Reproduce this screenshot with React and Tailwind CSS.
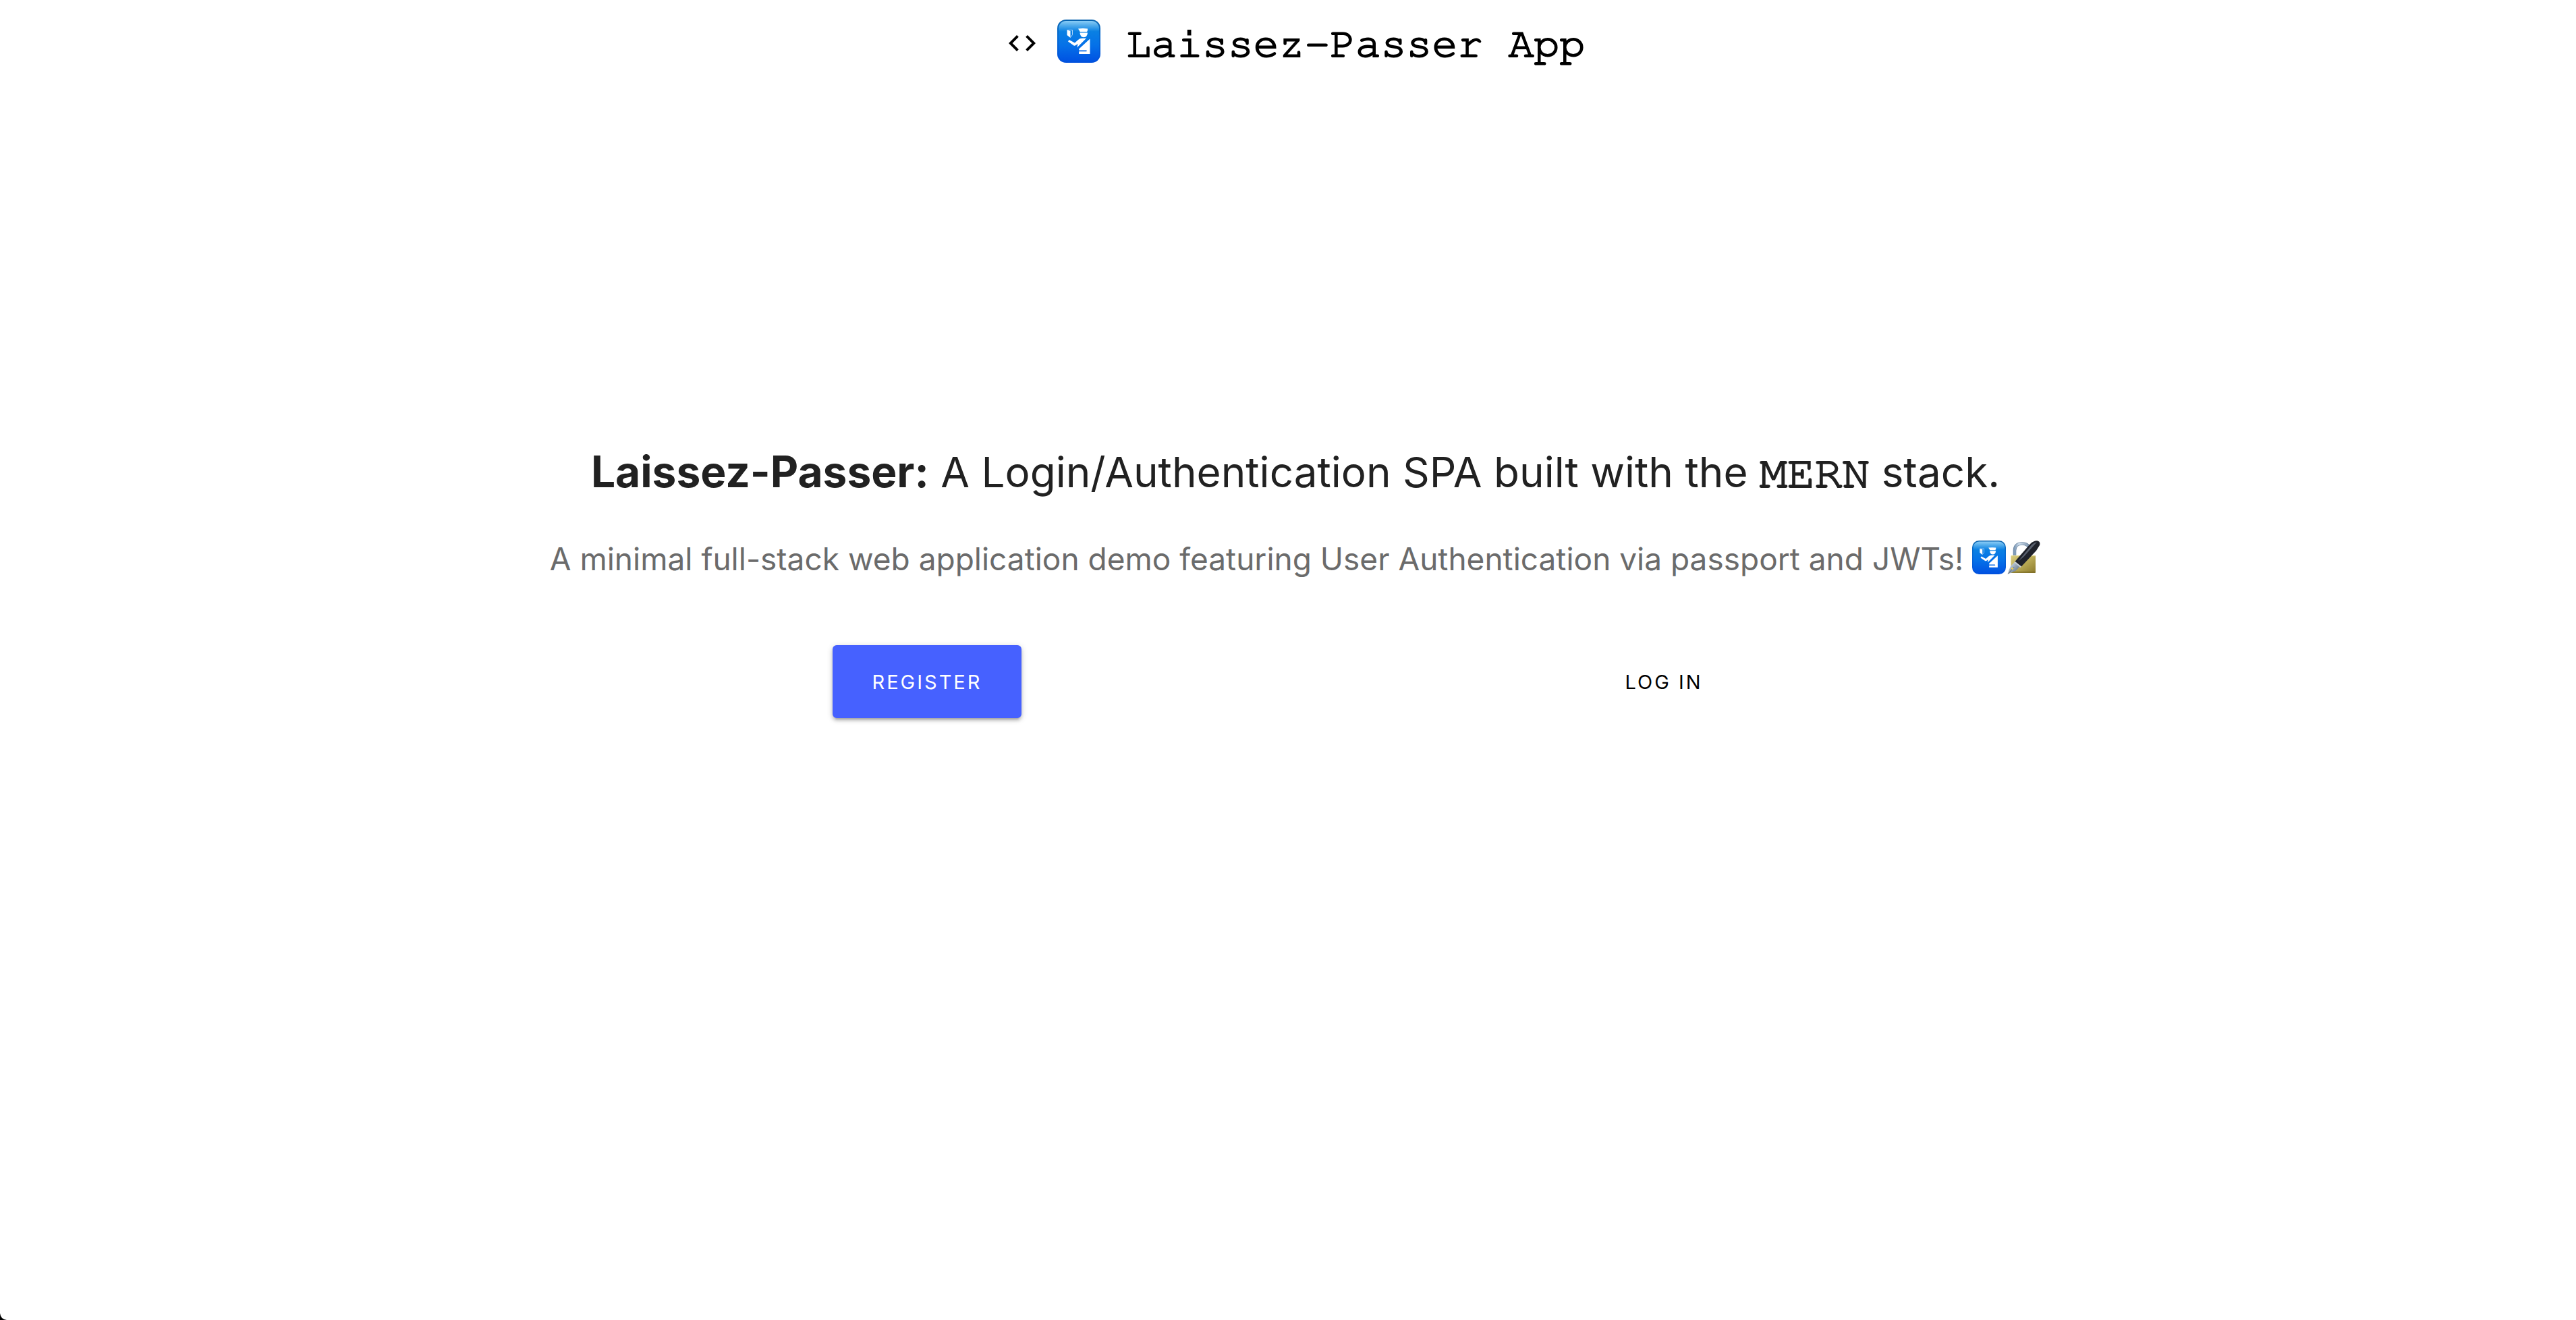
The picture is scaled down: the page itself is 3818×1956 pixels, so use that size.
import React from "react";

function CodeIcon({ className }) {
  return (
    <svg viewBox="0 0 24 24" fill="currentColor" className={className} aria-hidden="true">
      <path d="M9.4 16.6L4.800 12l4.600-4.600L8 6l-6 6 6 6 1.400-1.400zm5.200 0l4.600-4.600-4.600-4.600L16 6l6 6-6 6-1.400-1.400z" />
    </svg>
  );
}

function PassportIcon({ className }) {
  const id = React.useId();
  return (
    <svg viewBox="0 0 64 64" className={className} role="img" aria-label="Passport control">
      <defs>
        <linearGradient id={id + "face"} x1="0" y1="0" x2="0" y2="1">
          <stop offset="0" stopColor="#8accf6" />
          <stop offset="0.1" stopColor="#55aeec" />
          <stop offset="0.26" stopColor="#0a80e3" />
          <stop offset="0.6" stopColor="#0571e8" />
          <stop offset="1" stopColor="#0052e2" />
        </linearGradient>
        <linearGradient id={id + "edge"} x1="0" y1="0" x2="0" y2="1">
          <stop offset="0" stopColor="#0763ae" />
          <stop offset="0.4" stopColor="#066ad2" />
          <stop offset="1" stopColor="#0050dc" />
        </linearGradient>
      </defs>
      <rect width="64" height="64" rx="13" fill={`url(#${id}edge)`} />
      <rect x="2" y="2" width="60" height="60" rx="11" fill={`url(#${id}face)`} />
      <g fill="#fff">
        <path d="M31 13.500Q38 12.700 45 13.500V16L44 18.300H33.800z" />
        <path d="M33.500 19.600H45Q44.500 26.300 39.300 26.300Q34 26.300 33.500 19.600z" />
        <path d="M48.500 28.500V51H32.200V47.300H43Q45 46.400 43 45.500H32.200V43.500z" />
        <path d="M43 27.700H37Q33 27.700 31 30L26 34.500L17.500 30L16 32.500L24.500 38.500Q26 39.300 27.500 38L30.500 36L29.300 41.500z" />
        <path d="M14.500 15.500L19.500 17V27L14.500 23z" />
      </g>
      <path d="M14.500 15.500H22.500V22.500L19.500 26.500" fill="none" stroke="#a9d2f8" strokeWidth="1" />
    </svg>
  );
}

function LockPenIcon({ className }) {
  return (
    <svg viewBox="0 0 50 50" className={className} role="img" aria-label="Locked with pen">
      <defs>
        <linearGradient id="lock-body" x1="0" y1="0" x2="1" y2="1">
          <stop offset="0" stopColor="#d9cc7a" />
          <stop offset="0.5" stopColor="#b9aa55" />
          <stop offset="1" stopColor="#8c7a2c" />
        </linearGradient>
        <linearGradient id="lock-shackle" x1="0" y1="0" x2="1" y2="0">
          <stop offset="0" stopColor="#7f9bb8" />
          <stop offset="0.3" stopColor="#d3e2f0" />
          <stop offset="1" stopColor="#7c93ac" />
        </linearGradient>
        <linearGradient id="pen-nib" x1="0" y1="0" x2="1" y2="1">
          <stop offset="0" stopColor="#eef3f8" />
          <stop offset="0.5" stopColor="#93a4b5" />
          <stop offset="1" stopColor="#4f5b68" />
        </linearGradient>
      </defs>
      <path d="M11 24V15Q11 4.500 22 4.500Q33 4.500 33 15V24" fill="none" stroke="#6d87a3" strokeWidth="4.600" />
      <path d="M11 24V15Q11 4.500 22 4.500Q33 4.500 33 15V24" fill="none" stroke="url(#lock-shackle)" strokeWidth="3" />
      <rect x="5.500" y="22" width="36.500" height="26" rx="1" fill="url(#lock-body)" />
      <path d="M6 22.700H41.500" stroke="#eadf9c" strokeWidth="1" />
      <path d="M6 46.800H41.500" stroke="#75641f" strokeWidth="1.200" />
      <path d="M12 31L19.500 37.500L13 44.500Q7 47.500 1 49.500Q2.500 42.500 5 38z" fill="url(#pen-nib)" />
      <path d="M1 49.500L10 39.500" stroke="#3d4650" strokeWidth="0.800" />
      <circle cx="7.500" cy="41.500" r="1.600" fill="#f0cf4a" />
      <path d="M34 5Q40 -0.500 45.500 0.500Q49.500 2 48 7L43 15L21 38.500L11.500 31z" fill="#1f222b" />
      <path d="M36 6.500Q40 2.500 44 2.200L24.500 24L16 31z" fill="#59606e" />
      <path d="M11.500 31L21 38.500L19.500 40L10.500 32.500z" fill="#c8d0d8" />
    </svg>
  );
}

const emojiInline = "inline-block size-[50px] align-[-6px]";

export default function App() {
  return (
    <div className="relative min-h-screen bg-white pl-[22px] font-['Inter',sans-serif] text-[#212121]">
      <nav>
        <a
          href="#"
          className="flex h-32 items-center justify-center font-['FreeMono','Liberation_Mono',monospace] text-[63px] text-black [-webkit-text-stroke:2px_currentColor]"
        >
          <CodeIcon className="mr-7 size-12" />
          <PassportIcon className="mb-1.5 mr-[38px] size-16" />
          <span className="pt-1">Laissez-Passer App</span>
        </a>
      </nav>
      <main className="flex min-h-[75vh] flex-col items-center justify-center pt-0.5 text-center">
        <h4 className="text-[62px] leading-[76px]">
          <b className="text-[64px] font-bold">Laissez-Passer:</b> A Login/Authentication SPA built with the{" "}
          <span className="font-['FreeMono','Liberation_Mono',monospace] text-[68px] leading-none [-webkit-text-stroke:2px_currentColor]">
            MERN
          </span>{" "}
          stack.
        </h4>
        <p className="mt-[52px] text-[46px] leading-[76px] text-[#6b6b6b]">
          A minimal full-stack web application demo featuring User Authentication via passport and JWTs!{" "}
          <PassportIcon className={emojiInline} />
          <LockPenIcon className={emojiInline + " ml-[2px]"} />
        </p>
        <div className="mt-[90px] grid w-full max-w-[2184px] grid-cols-2 justify-items-center">
          <button
            type="button"
            className="h-[108px] w-[280px] rounded-[6px] bg-[#4661ff] pt-[2px] text-[29px] tracking-[3px] text-white shadow-[0_4px_4px_rgba(0,0,0,0.14),0_6px_2px_-4px_rgba(0,0,0,0.12),0_2px_10px_rgba(0,0,0,0.2)]"
          >
            REGISTER
          </button>
          <button type="button" className="h-[108px] w-[280px] rounded-[6px] pt-[2px] text-[29px] tracking-[3px] text-black">
            LOG IN
          </button>
        </div>
      </main>
      <svg viewBox="0 0 10 10" className="absolute bottom-0 left-0 size-[10px]" aria-hidden="true">
        <path d="M0 0Q1 9 10 10H0z" fill="#000" />
      </svg>
    </div>
  );
}
